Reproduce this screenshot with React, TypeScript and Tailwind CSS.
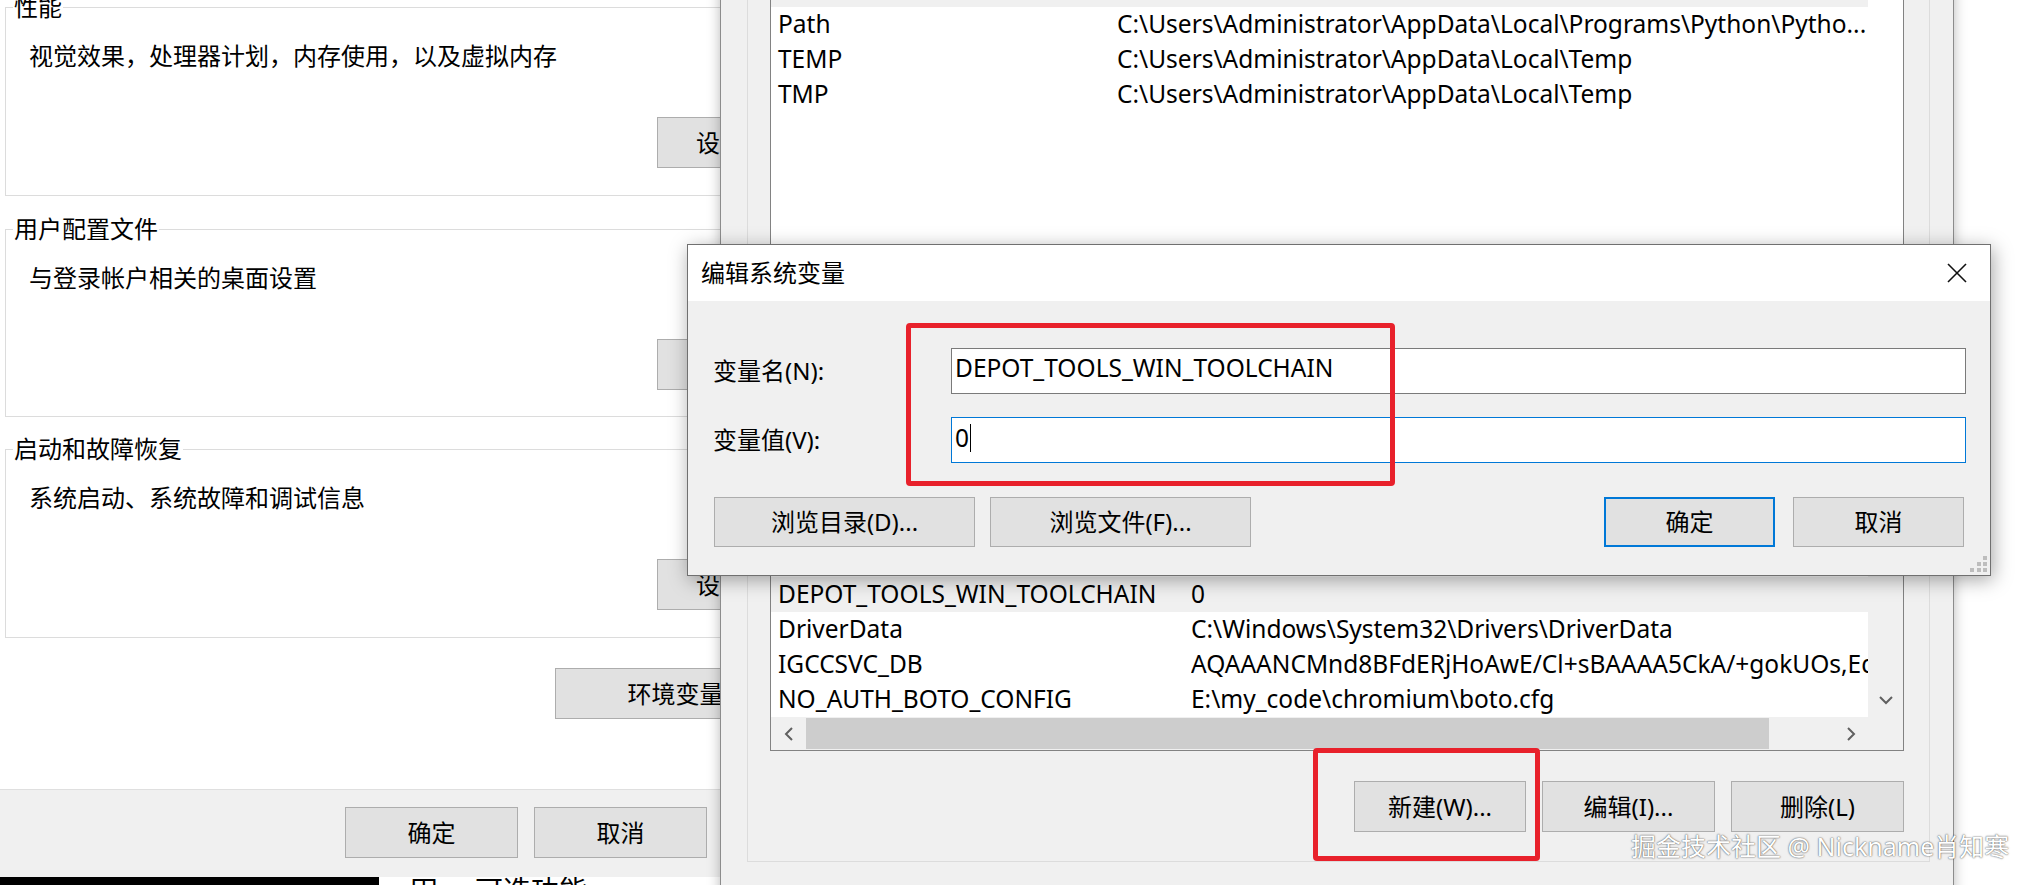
import React from "react";

type Row = { name: string; value: string; selected?: boolean };

const userRows: Row[] = [
  { name: "OneDrive", value: "C:\\Users\\Administrator\\OneDrive", selected: true },
  { name: "Path", value: "C:\\Users\\Administrator\\AppData\\Local\\Programs\\Python\\Pytho..." },
  { name: "TEMP", value: "C:\\Users\\Administrator\\AppData\\Local\\Temp" },
  { name: "TMP", value: "C:\\Users\\Administrator\\AppData\\Local\\Temp" },
];

const systemRows: Row[] = [
  { name: "ComSpec", value: "C:\\Windows\\system32\\cmd.exe" },
  { name: "configsetroot", value: "C:\\Windows\\ConfigSetRoot" },
  { name: "DEPOT_TOOLS_WIN_TOOLCHAIN", value: "0", selected: true },
  { name: "DriverData", value: "C:\\Windows\\System32\\Drivers\\DriverData" },
  {
    name: "IGCCSVC_DB",
    value:
      "AQAAANCMnd8BFdERjHoAwE/Cl+sBAAAA5CkA/+gokUOs,Eq3xW0CeLm2tAAAAAAIAAAAAABBmAAAAAQAAIAAA",
  },
  { name: "NO_AUTH_BOTO_CONFIG", value: "E:\\my_code\\chromium\\boto.cfg" },
  { name: "NUMBER_OF_PROCESSORS", value: "12" },
];

function WinButton({
  label,
  className = "",
  focused = false,
}: {
  label: string;
  className?: string;
  focused?: boolean;
}) {
  return (
    <button
      type="button"
      className={`flex shrink-0 items-center justify-center whitespace-nowrap bg-[#e1e1e1] text-[24px] leading-none text-black ${
        focused ? "border-2 border-[#0078d7]" : "border border-[#adadad]"
      } ${className}`}
    >
      {label}
    </button>
  );
}

/* Classic group box: a titled frame whose top border is broken by the caption */
function GroupFrame({
  title,
  className = "",
  bodyClass = "",
  children,
}: {
  title: string;
  className?: string;
  bodyClass?: string;
  children?: React.ReactNode;
}) {
  return (
    <div className={`flex flex-col ${className}`}>
      <div className="flex h-[24px] shrink-0">
        <div className="h-[12px] w-[8px] self-end border-l border-t border-[#dcdcdc]" />
        <span className="whitespace-nowrap px-px leading-[24px]">{title}</span>
        <div className="h-[12px] flex-1 self-end border-r border-t border-[#dcdcdc]" />
      </div>
      <div className={`flex flex-1 flex-col border-x border-b border-[#dcdcdc] ${bodyClass}`}>
        {children}
      </div>
    </div>
  );
}

function SettingsGroup({
  title,
  desc,
  action,
  h,
  className = "",
}: {
  title: string;
  desc: string;
  action: string;
  h: string;
  className?: string;
}) {
  return (
    <GroupFrame title={title} className={`${h} ${className}`} bodyClass="pl-[23px]">
      <p className="mt-[20px] whitespace-nowrap leading-[34px]">{desc}</p>
      <WinButton label={action} className="ml-[628px] mt-[44px] h-[51px] w-[173px]" />
    </GroupFrame>
  );
}

function Chevron({ dir }: { dir: "left" | "right" | "down" }) {
  if (dir === "down") {
    return (
      <svg width="16" height="10" viewBox="0 0 16 10" fill="none">
        <polyline points="2,2 8,8 14,2" stroke="#606060" strokeWidth="2" />
      </svg>
    );
  }
  return (
    <svg width="10" height="16" viewBox="0 0 10 16" fill="none">
      {dir === "left" ? (
        <polyline points="8,2 2,8 8,14" stroke="#606060" strokeWidth="2" />
      ) : (
        <polyline points="2,2 8,8 2,14" stroke="#606060" strokeWidth="2" />
      )}
    </svg>
  );
}

function ListRow({ row, nameW }: { row: Row; nameW: string }) {
  return (
    <div
      className={`flex h-[35px] w-[1097px] shrink-0 items-center whitespace-nowrap text-[24.5px] ${
        row.selected ? "bg-[#f0f0f0]" : "bg-white"
      }`}
    >
      <div className={`${nameW} shrink-0 overflow-hidden pl-[7px]`}>{row.name}</div>
      <div className="flex-1 overflow-hidden">{row.value}</div>
    </div>
  );
}

function ListHeader({ nameW, h }: { nameW: string; h: string }) {
  return (
    <div className={`flex ${h} w-[1097px] shrink-0 items-center border-b border-[#e5e5e5] bg-white`}>
      <div className={`${nameW} h-full shrink-0 border-r border-[#e5e5e5] pl-[7px] leading-[35px]`}>变量</div>
      <div className="pl-[7px]">值</div>
    </div>
  );
}

export default function App() {
  return (
    <div className="relative h-[885px] w-[2037px] overflow-hidden bg-white font-['Noto_Sans','Noto_Sans_CJK_SC',sans-serif] text-[24px] text-black">
      {/* window behind everything, bottom-left */}
      <div className="absolute left-0 top-[862px] flex h-[23px] w-[760px]">
        <div className="w-[379px] bg-black" />
        <div className="flex flex-1 bg-white pl-[31px] pt-[14px] text-[28px] leading-[28px]">
          <span>田</span>
          <span className="ml-[37px]">可选功能</span>
        </div>
      </div>

      {/* System properties – Advanced tab */}
      <div className="absolute left-0 top-[-5px] flex h-[882px] w-[910px] flex-col bg-white">
        <div className="flex flex-1 flex-col pl-[5px] pr-[5px]">
          <SettingsGroup
            title="性能"
            desc="视觉效果，处理器计划，内存使用，以及虚拟内存"
            action="设置(S)..."
            h="h-[201px]"
          />
          <SettingsGroup
            title="用户配置文件"
            desc="与登录帐户相关的桌面设置"
            action="设置(E)..."
            h="h-[200px]"
            className="mt-[21px]"
          />
          <SettingsGroup
            title="启动和故障恢复"
            desc="系统启动、系统故障和调试信息"
            action="设置(T)..."
            h="h-[201px]"
            className="mt-[20px]"
          />
          <WinButton label="环境变量(N)..." className="ml-[550px] mt-[30px] h-[51px] w-[293px]" />
        </div>
        <div className="flex h-[88px] shrink-0 justify-end gap-[16px] border-t border-[#dfdfdf] bg-[#f0f0f0] pr-[14px] pt-[17px]">
          <WinButton label="确定" className="h-[51px] w-[173px]" />
          <WinButton label="取消" className="h-[51px] w-[173px]" />
          <WinButton label="应用(A)" className="h-[51px] w-[173px]" />
        </div>
      </div>

      {/* Environment variables window */}
      <div className="absolute left-[720px] top-[-110px] flex h-[1010px] w-[1234px] flex-col border-x border-[#8c8c8c] bg-[#f0f0f0] pl-[26px] pr-[23px] pt-[10px] shadow-[0_0_12px_rgba(0,0,0,0.28)]">
        <GroupFrame title="Administrator 的用户变量(U)" bodyClass="pl-[22px] pr-[25px] pb-[20px]">
          <div className="mt-[11px] flex h-[366px] flex-col overflow-hidden border border-[#828282] bg-white">
            <ListHeader nameW="w-[346px]" h="h-[36px]" />
            {userRows.map((r) => (
              <ListRow key={r.name} row={r} nameW="w-[346px]" />
            ))}
          </div>
          <div className="mt-[19px] flex justify-end gap-[16px]">
            <WinButton label="新建(N)..." className="h-[51px] w-[173px]" />
            <WinButton label="编辑(E)..." className="h-[51px] w-[173px]" />
            <WinButton label="删除(D)" className="h-[51px] w-[173px]" />
          </div>
        </GroupFrame>

        <GroupFrame title="系统变量(S)" className="mt-[15px]" bodyClass="pl-[22px] pr-[25px] pb-[29px]">
          <div className="mt-[40px] flex flex-col border border-[#828282] bg-white">
            <div className="flex h-[245px]">
              <div className="flex flex-1 flex-col overflow-hidden">
                <ListHeader nameW="w-[420px]" h="h-[35px]" />
                {systemRows.map((r) => (
                  <ListRow key={r.name} row={r} nameW="w-[420px]" />
                ))}
              </div>
              <div className="flex w-[35px] flex-col justify-end bg-[#f0f0f0]">
                <div className="flex h-[35px] items-center justify-center">
                  <Chevron dir="down" />
                </div>
              </div>
            </div>
            <div className="flex h-[33px] bg-[#f0f0f0]">
              <div className="flex w-[35px] items-center justify-center">
                <Chevron dir="left" />
              </div>
              <div className="my-[1px] w-[963px] bg-[#cdcdcd]" />
              <div className="flex-1" />
              <div className="flex w-[35px] items-center justify-center">
                <Chevron dir="right" />
              </div>
              <div className="w-[35px]" />
            </div>
          </div>
          <div className="mt-[30px] flex justify-end gap-[16px]">
            <WinButton label="新建(W)..." className="h-[51px] w-[172px]" />
            <WinButton label="编辑(I)..." className="h-[51px] w-[173px]" />
            <WinButton label="删除(L)" className="h-[51px] w-[173px]" />
          </div>
        </GroupFrame>
      </div>

      {/* Edit system variable dialog */}
      <div className="absolute left-[687px] top-[244px] flex h-[332px] w-[1304px] flex-col border border-[#707070] shadow-[2px_4px_18px_rgba(0,0,0,0.35)]">
        <div className="flex h-[56px] shrink-0 items-center justify-between bg-white pl-[13px] pr-[23px]">
          <span className="leading-none">编辑系统变量</span>
          <svg width="20" height="20" viewBox="0 0 20 20" fill="none">
            <line x1="1" y1="1" x2="19" y2="19" stroke="#111" strokeWidth="1.6" />
            <line x1="19" y1="1" x2="1" y2="19" stroke="#111" strokeWidth="1.6" />
          </svg>
        </div>
        <div className="relative flex flex-1 flex-col bg-[#f0f0f0] pl-[25px] pr-[24px] pt-[47px]">
          <div className="flex h-[46px] items-center">
            <span className="w-[238px] shrink-0">变量名(N):</span>
            <div className="flex h-full flex-1 items-center border border-[#7a7a7a] bg-white pb-[6px] pl-[3px] text-[24.5px]">
              DEPOT_TOOLS_WIN_TOOLCHAIN
            </div>
          </div>
          <div className="mt-[23px] flex h-[46px] items-center">
            <span className="w-[238px] shrink-0">变量值(V):</span>
            <div className="flex h-full flex-1 items-center border border-[#0078d7] bg-white pb-[4px] pl-[3px] text-[24.5px]">
              <span>0</span>
              <span className="ml-px h-[28px] w-px bg-black" />
            </div>
          </div>
          <div className="mt-[34px] flex h-[50px] pr-[2px]">
            <WinButton label="浏览目录(D)..." className="ml-px h-full w-[261px]" />
            <WinButton label="浏览文件(F)..." className="ml-[15px] h-full w-[261px]" />
            <div className="flex-1" />
            <WinButton label="确定" focused className="h-full w-[171px]" />
            <WinButton label="取消" className="ml-[18px] h-full w-[171px]" />
          </div>
          {/* size grip */}
          <svg className="absolute bottom-[3px] right-[3px]" width="17" height="16" viewBox="0 0 17 16">
            <g fill="#bdbdbd">
              <rect x="13" y="0" width="4" height="4" />
              <rect x="7" y="6" width="4" height="4" />
              <rect x="13" y="6" width="4" height="4" />
              <rect x="0" y="12" width="4" height="4" />
              <rect x="7" y="12" width="4" height="4" />
              <rect x="13" y="12" width="4" height="4" />
            </g>
          </svg>
        </div>
      </div>

      {/* red highlight marks */}
      <div className="absolute left-[906px] top-[323px] h-[163px] w-[489px] rounded-[4px] border-[5px] border-[#e8212b]" />
      <div className="absolute left-[1313px] top-[748px] h-[113px] w-[227px] rounded-[4px] border-[5px] border-[#e8212b]" />

      {/* site watermark */}
      <div className="absolute left-[1631px] top-[834px] whitespace-nowrap text-[25px] leading-[25px] text-white [text-shadow:0_0_2px_rgba(0,0,0,0.55),0_0_1px_rgba(0,0,0,0.5)]">
        掘金技术社区 @ Nickname肖知寒
      </div>
    </div>
  );
}
